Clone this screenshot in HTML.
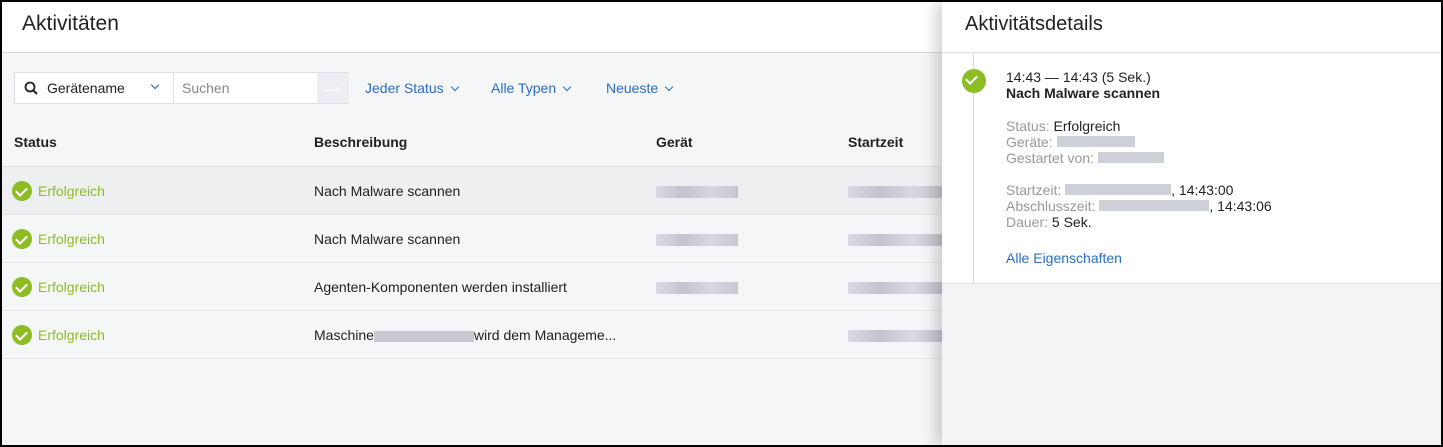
<!DOCTYPE html>
<html><head><meta charset="utf-8"><style>
*{margin:0;padding:0;box-sizing:border-box}
body{width:1443px;height:447px;overflow:hidden;font-family:"Liberation Sans",sans-serif;background:#000;position:relative}
.frame{position:absolute;left:2px;top:2px;width:1439px;height:443px;background:#f5f6f8;overflow:hidden}
.hdr{position:absolute;left:0;top:0;width:100%;height:51px;background:#fff;border-bottom:1px solid #d6d8e0}
.hdr h1{position:absolute;left:20px;top:10px;font-weight:normal;font-size:21px;color:#222}
.abs{position:absolute}
.blue{color:#2b6cc4}
.chev{display:inline-block;width:6px;height:6px;border-right:1.6px solid #2b6cc4;border-bottom:1.6px solid #2b6cc4;transform:rotate(45deg);margin-left:8px;position:relative;top:-3px}
.row{position:absolute;left:0;width:940px;height:48px;border-bottom:1px solid #e3e5ea;font-size:14px;color:#222}
.row span{position:absolute;top:16px}
.ok{position:absolute;left:10px;top:14px;width:20px;height:20px;border-radius:50%;background:#8cbd24}
.ok:after{content:"";position:absolute;left:6px;top:4px;width:5px;height:9px;border-right:2.5px solid #fff;border-bottom:2.5px solid #fff;transform:rotate(45deg)}
.blur{position:absolute;height:12px;background:linear-gradient(90deg,#d5d7dc,#b8bcc4,#d2d4da,#bcc0c8);opacity:.85}
.g{color:#999}
</style></head><body><div class="frame">
<div class="hdr"><h1>Aktivitäten</h1></div>
<div class="abs" style="left:12px;top:70px;width:335px;height:32px;background:#fff;border:1px solid #dcdfe5"></div>
<div class="abs" style="left:315px;top:71px;width:32px;height:30px;background:#eceef1;color:#fff;font-size:24px;text-align:center;line-height:28px">→</div>
<div class="abs" style="left:171px;top:71px;width:1px;height:30px;background:#dcdfe5"></div>
<svg class="abs" style="left:22px;top:79px" width="14" height="14"><circle cx="6" cy="6" r="4.5" stroke="#222" stroke-width="1.8" fill="none"/><path d="M9.5 9.5L13 13" stroke="#222" stroke-width="2"/></svg>
<div class="abs" style="left:45px;top:78px;font-size:14px;color:#222">Gerätename</div>
<div class="abs" style="left:150px;top:80px;width:6px;height:6px;border-right:1.6px solid #2b5a9a;border-bottom:1.6px solid #2b5a9a;transform:rotate(45deg)"></div>
<div class="abs" style="left:180px;top:78px;font-size:14px;color:#888">Suchen</div>
<div class="abs blue" style="left:363px;top:78px;font-size:14px">Jeder Status<i class="chev"></i></div>
<div class="abs blue" style="left:489px;top:78px;font-size:14px">Alle Typen<i class="chev"></i></div>
<div class="abs blue" style="left:604px;top:78px;font-size:14px">Neueste<i class="chev"></i></div>
<div class="abs" style="left:12px;top:132px;font-size:14px;font-weight:bold;color:#222">Status</div>
<div class="abs" style="left:312px;top:132px;font-size:14px;font-weight:bold;color:#222">Beschreibung</div>
<div class="abs" style="left:654px;top:132px;font-size:14px;font-weight:bold;color:#222">Gerät</div>
<div class="abs" style="left:846px;top:132px;font-size:14px;font-weight:bold;color:#222">Startzeit</div>
<div class="abs" style="left:0;top:164px;width:940px;height:1px;background:#e0e2e7"></div>
<div class="row" style="top:165px;background:#eeeff1"><i class="ok"></i><span style="left:36px;color:#8cbd24">Erfolgreich</span><span style="left:312px">Nach Malware scannen</span><i class="blur" style="left:654px;top:19px;width:82px"></i><i class="blur" style="left:846px;top:19px;width:94px"></i></div>
<div class="row" style="top:213px"><i class="ok"></i><span style="left:36px;color:#8cbd24">Erfolgreich</span><span style="left:312px">Nach Malware scannen</span><i class="blur" style="left:654px;top:19px;width:82px"></i><i class="blur" style="left:846px;top:19px;width:94px"></i></div>
<div class="row" style="top:261px"><i class="ok"></i><span style="left:36px;color:#8cbd24">Erfolgreich</span><span style="left:312px">Agenten-Komponenten werden installiert</span><i class="blur" style="left:654px;top:19px;width:82px"></i><i class="blur" style="left:846px;top:19px;width:94px"></i></div>
<div class="row" style="top:309px"><i class="ok"></i><span style="left:36px;color:#8cbd24">Erfolgreich</span><span style="left:312px">Maschine<i style="display:inline-block;width:100px;height:11px;background:#c7cad0;vertical-align:middle"></i>wird dem Manageme...</span><i class="blur" style="left:846px;top:19px;width:94px"></i></div>
<div class="abs" style="left:940px;top:0;width:500px;height:443px;background:#f3f4f6;box-shadow:-6px 0 14px rgba(0,0,0,.18)">
<div style="position:absolute;left:0;top:0;width:500px;height:51px;background:#fff;border-bottom:1px solid #e0e2e7"></div>
<div style="position:absolute;left:23px;top:11px;font-size:20px;color:#222">Aktivitätsdetails</div>
<div style="position:absolute;left:0;top:52px;width:500px;height:230px;background:#fff;border-bottom:1px solid #e0e2e7"></div>
<div style="position:absolute;left:31px;top:52px;width:1px;height:230px;background:#d6d8de"></div>
<i class="ok" style="left:20px;top:67px;width:24px;height:24px"></i>
<div style="position:absolute;left:64px;top:67px;font-size:14px;color:#222;line-height:16px">14:43 — 14:43 (5 Sek.)<br><b>Nach Malware scannen</b></div>
<div style="position:absolute;left:64px;top:116px;font-size:14px;color:#222;line-height:16px"><span class="g">Status:</span> Erfolgreich<br><span class="g">Geräte:</span> <i style="display:inline-block;width:78px;height:11px;background:#cdd0d6"></i><br><span class="g">Gestartet von:</span> <i style="display:inline-block;width:66px;height:11px;background:#cdd0d6"></i><br><br><span class="g">Startzeit:</span> <i style="display:inline-block;width:106px;height:11px;background:#cdd0d6"></i>, 14:43:00<br><span class="g">Abschlusszeit:</span> <i style="display:inline-block;width:110px;height:11px;background:#cdd0d6"></i>, 14:43:06<br><span class="g">Dauer:</span> 5 Sek.</div>
<div class="blue" style="position:absolute;left:64px;top:248px;font-size:14px">Alle Eigenschaften</div>
</div>
</div></body></html>
